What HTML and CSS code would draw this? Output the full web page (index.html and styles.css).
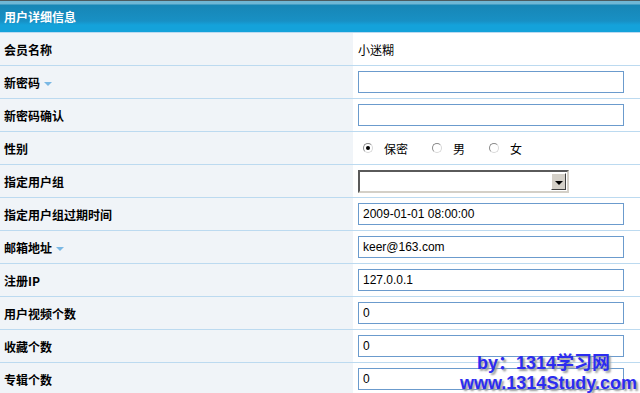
FILE: index.html
```html
<!DOCTYPE html>
<html lang="zh-CN">
<head>
    <meta charset="UTF-8">
    <title>用户详细信息</title>
    <link rel="stylesheet" href="styles.css">
</head>
<body>
    <div class="panel">
        <div class="panel-title">用户详细信息</div>
        <table class="info">
            <tr>
                <th>会员名称</th>
                <td><span class="plain">小迷糊</span></td>
            </tr>
            <tr>
                <th>新密码 <span class="tip"></span></th>
                <td><input type="text" class="box"></td>
            </tr>
            <tr>
                <th>新密码确认</th>
                <td><input type="text" class="box"></td>
            </tr>
            <tr>
                <th>性别</th>
                <td>
                    <div class="radios">
                        <label><span class="radio checked"></span>保密</label>
                        <label><span class="radio"></span>男</label>
                        <label><span class="radio"></span>女</label>
                    </div>
                </td>
            </tr>
            <tr>
                <th>指定用户组</th>
                <td>
                    <div class="select">
                        <span class="select-text"></span>
                        <span class="select-btn"></span>
                    </div>
                </td>
            </tr>
            <tr>
                <th>指定用户组过期时间</th>
                <td><input type="text" class="box" value="2009-01-01 08:00:00"></td>
            </tr>
            <tr>
                <th>邮箱地址 <span class="tip"></span></th>
                <td><input type="text" class="box" value="keer@163.com"></td>
            </tr>
            <tr>
                <th>注册IP</th>
                <td><input type="text" class="box" value="127.0.0.1"></td>
            </tr>
            <tr>
                <th>用户视频个数</th>
                <td><input type="text" class="box" value="0"></td>
            </tr>
            <tr>
                <th>收藏个数</th>
                <td><input type="text" class="box" value="0"></td>
            </tr>
            <tr>
                <th>专辑个数</th>
                <td><input type="text" class="box" value="0"></td>
            </tr>
        </table>
    </div>

    <div class="watermark">
        <div class="wm-line1">by：1314学习网</div>
        <div class="wm-line2">www.1314Study.com</div>
    </div>
</body>
</html>
```

FILE: styles.css
```css
body {
    margin: 0;
    font-family: "Liberation Sans", "Noto Sans CJK SC", sans-serif;
    font-size: 12px;
    color: #000;
    background: #fff;
    overflow: hidden;
}

.panel {
    width: 640px;
}

.panel-title {
    height: 31px;
    line-height: 31px;
    border-top: 1px solid #4d5b60;
    padding-left: 4px;
    color: #fff;
    font-weight: bold;
    font-family: "Noto Sans CJK SC", sans-serif;
    background: linear-gradient(to bottom, #6fb7d6 0, #6fb7d6 3px, #1786b6 4px, #1890c4 20px, #14a2da 24px, #14a2da 31px);
}

.info {
    width: 100%;
    border-collapse: collapse;
}

.info th,
.info td {
    height: 32px;
    padding: 0;
    border-bottom: 1px solid #bcdaf0;
    border-top: 1px solid #bcdaf0;
}

.info th {
    width: 349px;
    padding-left: 4px;
    text-align: left;
    font-weight: bold;
    font-family: "Noto Sans CJK SC", sans-serif;
    background: #f0f4f8;
    white-space: nowrap;
}

.info td {
    padding-left: 5px;
}

.plain {
    font-family: "Noto Sans CJK SC", sans-serif;
}

.tip {
    display: inline-block;
    width: 0;
    height: 0;
    border-left: 4px solid transparent;
    border-right: 4px solid transparent;
    border-top: 4px solid #7ab8e4;
    vertical-align: middle;
    margin-left: 1px;
}

.box {
    display: block;
    box-sizing: border-box;
    width: 266px;
    height: 22px;
    margin: 0;
    padding: 0 4px;
    border: 1px solid #6b9bcd;
    font-family: "Liberation Sans", sans-serif;
    font-size: 12px;
    color: #000;
    background: #fff;
    outline: none;
}

.radios {
    display: flex;
    align-items: center;
    padding-left: 5px;
    font-family: "Noto Sans CJK SC", sans-serif;
}

.radios label {
    display: flex;
    align-items: center;
    margin-right: 24px;
}

.radios label:last-child {
    margin-right: 0;
}

.radio {
    box-sizing: border-box;
    width: 10px;
    height: 10px;
    border-radius: 50%;
    border: 1px solid #8a8a8a;
    border-right-color: #d8d8d8;
    border-bottom-color: #d8d8d8;
    background: #fff;
    margin-right: 11px;
    position: relative;
}

.radio.checked::after {
    content: "";
    position: absolute;
    left: 2px;
    top: 2px;
    width: 4px;
    height: 4px;
    border-radius: 50%;
    background: #000;
}

.select {
    display: flex;
    box-sizing: border-box;
    width: 211px;
    height: 23px;
    border: 2px solid;
    border-color: #5a5a5a #d4d0c8 #d4d0c8 #5a5a5a;
    background: #fff;
}

.select-text {
    flex: 1;
}

.select-btn {
    width: 15px;
    margin: 1px;
    box-sizing: border-box;
    background: #d4d0c8;
    border: 1px solid;
    border-color: #fff #404040 #404040 #fff;
    position: relative;
}

.select-btn::after {
    content: "";
    position: absolute;
    left: 3px;
    top: 7px;
    border-left: 4px solid transparent;
    border-right: 4px solid transparent;
    border-top: 4px solid #000;
}

.watermark {
    position: absolute;
    left: 460px;
    top: 353px;
    color: #2c2cf0;
    font-family: "Liberation Sans", "Noto Sans CJK SC", sans-serif;
    font-weight: bold;
    font-size: 18px;
    line-height: 20px;
    text-shadow: 2px 2px 2px #9a9a9a;
}

.wm-line1 {
    padding-left: 17px;
}
```
